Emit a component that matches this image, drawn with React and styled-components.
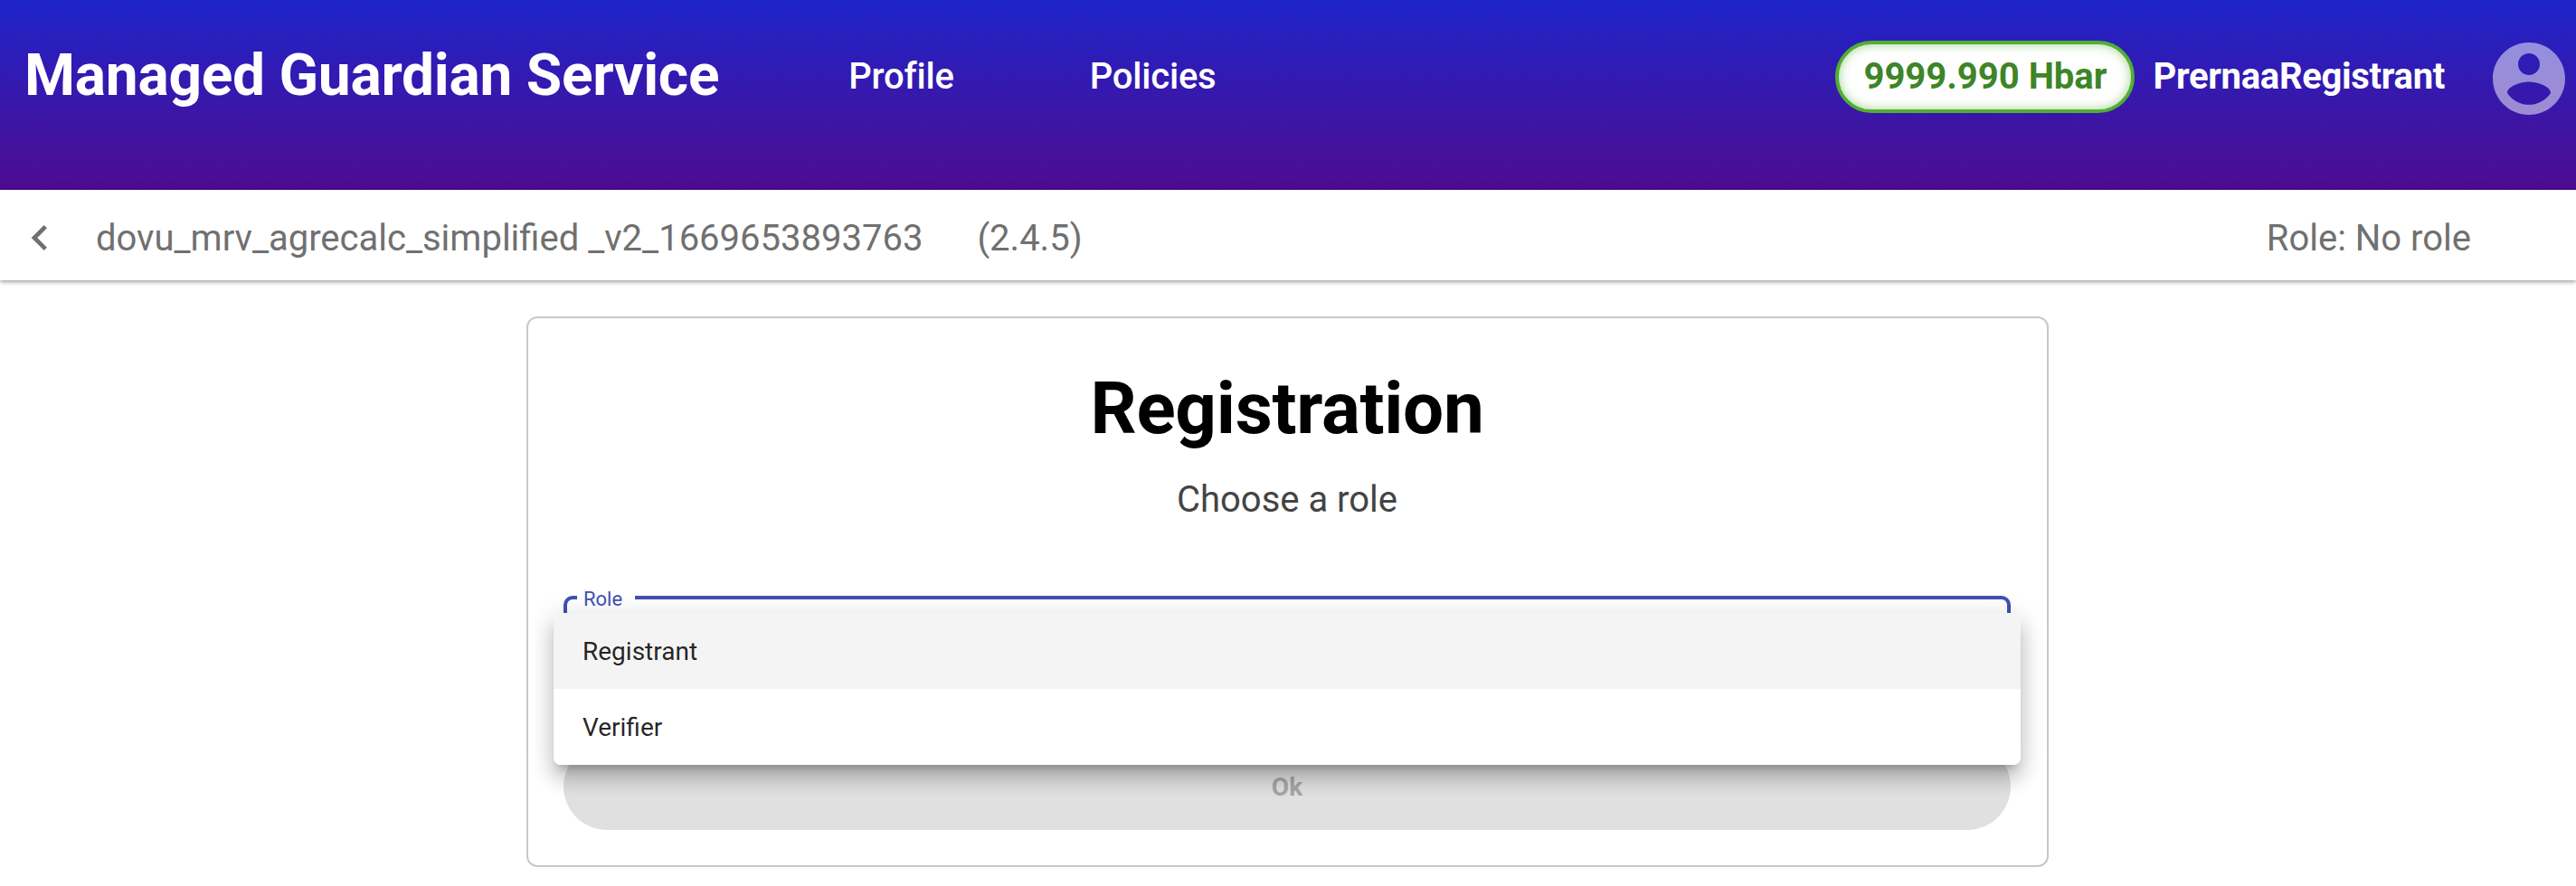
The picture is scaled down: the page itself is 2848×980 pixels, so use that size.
import React from "react";
import styled, { createGlobalStyle } from "styled-components";

const GlobalStyle = createGlobalStyle`
  html, body {
    margin: 0;
    padding: 0;
    background: #fff;
    font-family: Roboto, "Liberation Sans", sans-serif;
  }
`;

function App() {
  return (
    <>
      <GlobalStyle />
      <Header>
        <Brand>Managed Guardian Service</Brand>
        <Nav>
          <NavLink>Profile</NavLink>
          <NavLink>Policies</NavLink>
        </Nav>
        <Account>
          <Balance>9999.990 Hbar</Balance>
          <UserName>PrernaaRegistrant</UserName>
          <Avatar viewBox="0 0 24 24">
            <path d="M12 2C6.48 2 2 6.48 2 12s4.48 10 10 10 10-4.48 10-10S17.52 2 12 2zm0 3c1.66 0 3 1.34 3 3s-1.34 3-3 3-3-1.34-3-3 1.34-3 3-3zm0 14.2c-2.5 0-4.71-1.28-6-3.22.03-1.99 4-3.08 6-3.08 1.99 0 5.97 1.09 6 3.08-1.29 1.94-3.5 3.22-6 3.22z" />
          </Avatar>
        </Account>
      </Header>
      <PolicyBar>
        <BackIcon viewBox="0 0 24 24">
          <path d="M15.41 7.41L14 6l-6 6 6 6 1.41-1.41L10.83 12z" />
        </BackIcon>
        <PolicyName>dovu_mrv_agrecalc_simplified _v2_1669653893763</PolicyName>
        <PolicyVersion>(2.4.5)</PolicyVersion>
        <RoleInfo>Role: No role</RoleInfo>
      </PolicyBar>
      <Card>
        <Title>Registration</Title>
        <Subtitle>Choose a role</Subtitle>
        <Field>
          <FieldLabel>Role</FieldLabel>
          <Menu>
            <MenuItem $active>Registrant</MenuItem>
            <MenuItem>Verifier</MenuItem>
          </Menu>
        </Field>
        <OkButton disabled>Ok</OkButton>
      </Card>
    </>
  );
}

export default App;

const Header = styled.header`
  box-sizing: border-box;
  height: 210px;
  padding: 0 0 40px 27px;
  display: flex;
  align-items: center;
  color: #fff;
  background: linear-gradient(180deg, #1f24c9 0%, #4e0c90 100%);
`;

const Brand = styled.div`
  font-size: 64px;
  font-weight: 700;
  letter-spacing: -0.25px;
  white-space: nowrap;
  margin-top: -4px;
`;

const Nav = styled.nav`
  display: flex;
  gap: 150px;
  margin: -2px 0 0 143px;
`;

const NavLink = styled.div`
  font-size: 40px;
  font-weight: 500;
  letter-spacing: -0.2px;
`;

const Account = styled.div`
  display: flex;
  align-items: center;
  margin-left: auto;
`;

const Balance = styled.div`
  box-sizing: border-box;
  width: 331px;
  height: 80px;
  padding-bottom: 2px;
  display: flex;
  align-items: center;
  justify-content: center;
  border: 4px solid #52ae32;
  border-radius: 40px;
  background: #fff;
  box-shadow: inset 0 0 12px rgba(82, 174, 50, 0.55);
  color: #3d8527;
  font-size: 40px;
  font-weight: 700;
`;

const UserName = styled.div`
  margin: -2px 0 0 20px;
  font-size: 40px;
  font-weight: 700;
  letter-spacing: -0.3px;
`;

const Avatar = styled.svg`
  width: 96px;
  height: 96px;
  margin: 4px 4px 0 45px;
  fill: rgba(255, 255, 255, 0.5);
`;

const PolicyBar = styled.div`
  box-sizing: border-box;
  height: 100px;
  padding: 6px 116px 0 16px;
  display: flex;
  align-items: center;
  background: #fff;
  color: #707070;
  font-size: 40px;
  box-shadow: 0 2px 4px rgba(0, 0, 0, 0.3), 0 1px 10px rgba(0, 0, 0, 0.1);
  position: relative;
`;

const BackIcon = styled.svg`
  width: 56px;
  height: 56px;
  fill: #707070;
`;

const PolicyName = styled.div`
  margin-left: 34px;
`;

const PolicyVersion = styled.div`
  margin-left: 60px;
`;

const RoleInfo = styled.div`
  margin-left: auto;
`;

const Card = styled.main`
  box-sizing: border-box;
  width: 1683px;
  height: 609px;
  margin: 40px 0 0 582px;
  padding: 0 40px 0 39px;
  border: 2px solid #c8c8c8;
  border-radius: 12px;
  display: flex;
  flex-direction: column;
  background: #fff;
`;

const Title = styled.h1`
  margin: 53px 0 0;
  font-size: 80px;
  line-height: 94px;
  font-weight: 700;
  letter-spacing: -0.3px;
  text-align: center;
  color: #000;
`;

const Subtitle = styled.div`
  margin-top: 30px;
  font-size: 40px;
  line-height: 47px;
  text-align: center;
  color: #444;
`;

const Field = styled.div`
  box-sizing: border-box;
  position: relative;
  height: 112px;
  margin-top: 83px;
  border: 4px solid #3f51b5;
  border-radius: 10px;
`;

const FieldLabel = styled.span`
  position: absolute;
  left: 11px;
  top: -14px;
  padding: 0 14px 0 7px;
  background: #fff;
  color: #3f51b5;
  font-size: 22px;
  line-height: 28px;
`;

const Menu = styled.div`
  position: absolute;
  left: -15px;
  right: -15px;
  top: 15px;
  border-radius: 8px;
  overflow: hidden;
  background: #fff;
  box-shadow: 0 10px 10px -6px rgba(0, 0, 0, 0.2),
    0 16px 20px 2px rgba(0, 0, 0, 0.14), 0 6px 28px 4px rgba(0, 0, 0, 0.12);
`;

const MenuItem = styled.div`
  box-sizing: border-box;
  height: 84px;
  padding: 0 32px;
  display: flex;
  align-items: center;
  font-size: 28px;
  color: rgba(0, 0, 0, 0.87);
  background: ${(props) => (props.$active ? "#f4f4f4" : "#fff")};
`;

const OkButton = styled.button`
  height: 96px;
  margin-top: 51px;
  border: 0;
  border-radius: 48px;
  background: #e0e0e0;
  color: #a6a6a6;
  font-family: inherit;
  font-size: 28px;
  font-weight: 700;
`;
